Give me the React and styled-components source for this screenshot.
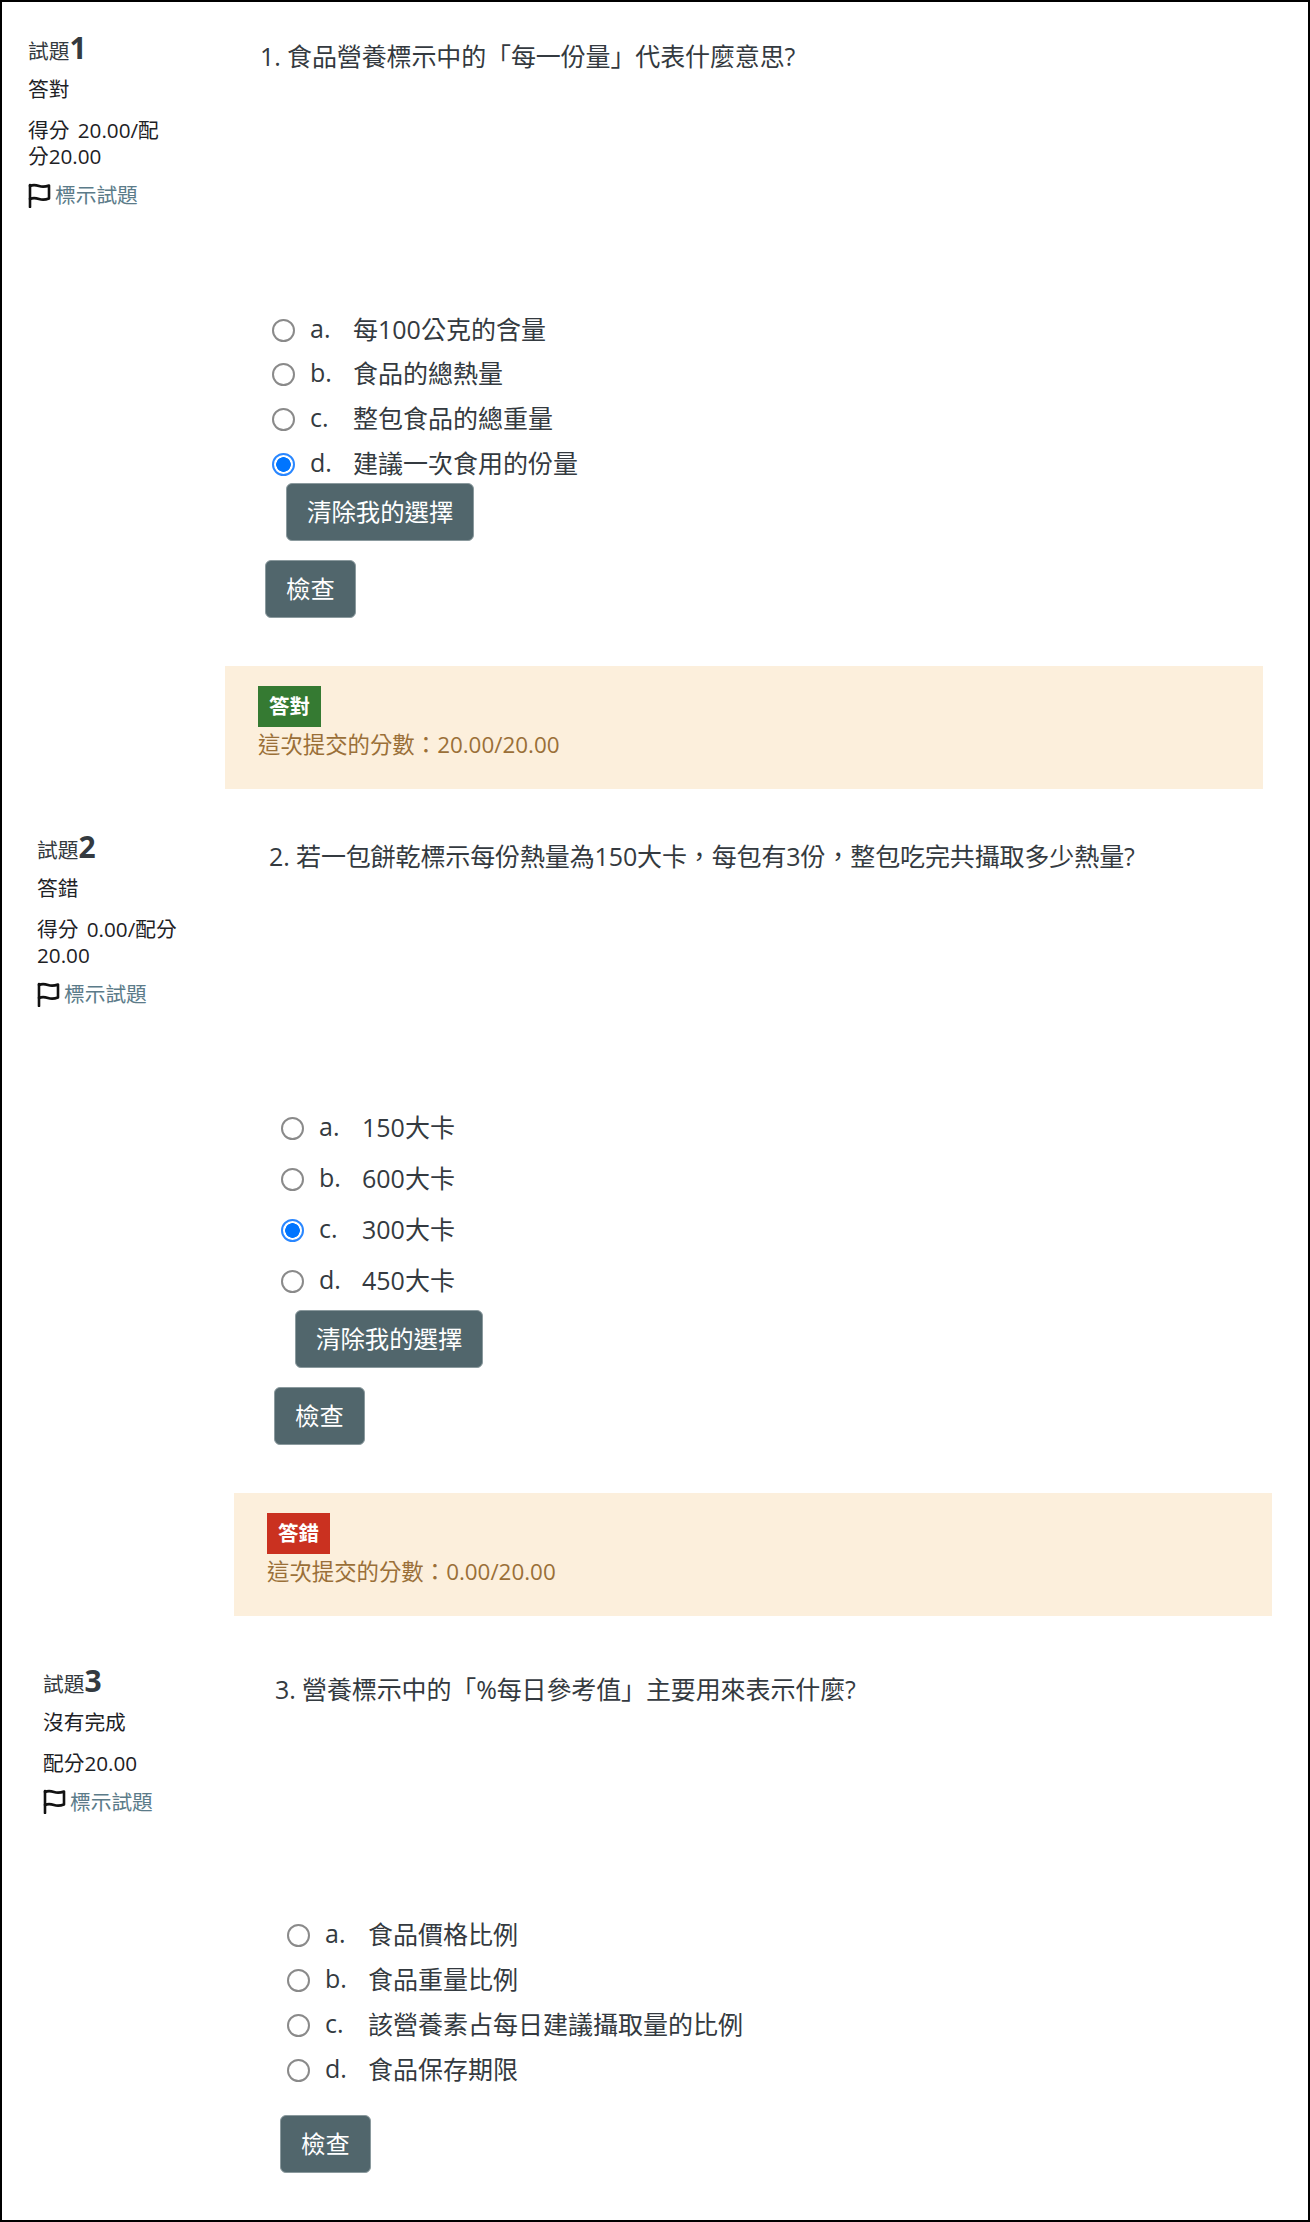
import React from 'react';
import styled, { createGlobalStyle } from 'styled-components';

const GlobalStyle = createGlobalStyle`
  html, body {
    margin: 0;
    padding: 0;
    background: #fff;
  }
  body {
    font-family: "Open Sans", "Noto Sans CJK TC", sans-serif;
    color: #343a40;
  }
  * {
    box-sizing: border-box;
  }
`;

const questions = [
  {
    no: 1,
    status: '答對',
    grade: '得分 20.00/配分20.00',
    title: '1. 食品營養標示中的「每一份量」代表什麼意思?',
    options: ['每100公克的含量', '食品的總熱量', '整包食品的總重量', '建議一次食用的份量'],
    picked: 3,
    indent: 0,
    top: 35,
    listTop: 237,
    rowGap: 6.7,
    clearTop: 0,
    checkTop: 19,
    feedback: { ok: true, label: '答對', score: '20.00/20.00' },
  },
  {
    no: 2,
    status: '答錯',
    grade: '得分 0.00/配分 20.00',
    title: '2. 若一包餅乾標示每份熱量為150大卡，每包有3份，整包吃完共攝取多少熱量?',
    options: ['150大卡', '600大卡', '300大卡', '450大卡'],
    picked: 2,
    indent: 9,
    top: 47,
    listTop: 235,
    rowGap: 13.3,
    clearTop: 9,
    checkTop: 19,
    feedback: { ok: false, label: '答錯', score: '0.00/20.00' },
  },
  {
    no: 3,
    status: '沒有完成',
    grade: '配分20.00',
    title: '3. 營養標示中的「%每日參考值」主要用來表示什麼?',
    options: ['食品價格比例', '食品重量比例', '該營養素占每日建議攝取量的比例', '食品保存期限'],
    picked: -1,
    indent: 15,
    top: 54,
    listTop: 210,
    rowGap: 6.7,
    clearTop: 0,
    checkTop: 26,
    feedback: null,
  },
];

const letters = ['a.', 'b.', 'c.', 'd.'];

// comma and colon sit low and left in the picture, the SC cut has them that way
const withPunct = (text) =>
  text.split(/([，：])/).map((part, i) => (i % 2 ? <Punct key={i}>{part}</Punct> : part));

const FlagIcon = () => (
  <FlagSvg viewBox="0 0 23 25" fill="none" stroke="#111" strokeWidth="2.6" strokeLinecap="round" strokeLinejoin="round">
    <path d="M2 24V2" />
    <path d="M2 3c3-1.500 6-1 9 0s6 1 10-.5v13c-4 1.500-7 1.500-10 .5s-6-1.500-9 0" />
  </FlagSvg>
);

const Question = ({ q }) => (
  <QuestionRow $indent={q.indent} $top={q.top}>
    <Side>
      <SideHead>
        試題<SideNumber>{q.no}</SideNumber>
      </SideHead>
      <SideStatus>{q.status}</SideStatus>
      <SideGrade>{q.grade}</SideGrade>
      <FlagRow>
        <FlagIcon />
        <FlagLink>標示試題</FlagLink>
      </FlagRow>
    </Side>
    <Content>
      <QuestionText>{withPunct(q.title)}</QuestionText>
      <OptionList $top={q.listTop} $gap={q.rowGap}>
        {q.options.map((text, i) => (
          <OptionRow key={text}>
            <Radio type="radio" name={`q${q.no}`} defaultChecked={i === q.picked} />
            <OptionLetter>{letters[i]}</OptionLetter>
            <OptionText>{text}</OptionText>
          </OptionRow>
        ))}
      </OptionList>
      {q.picked >= 0 && <ClearButton $top={q.clearTop}>清除我的選擇</ClearButton>}
      <CheckButton $top={q.checkTop}>檢查</CheckButton>
      {q.feedback && (
        <Feedback>
          <Badge $ok={q.feedback.ok}>{q.feedback.label}</Badge>
          <FeedbackText>{withPunct(`這次提交的分數：${q.feedback.score}`)}</FeedbackText>
        </Feedback>
      )}
    </Content>
  </QuestionRow>
);

const App = () => (
  <Page lang="zh-TW">
    <GlobalStyle />
    {questions.map((q) => (
      <Question key={q.no} q={q} />
    ))}
  </Page>
);

export default App;

const Page = styled.div`
  width: 1310px;
  height: 2222px;
  border: 2px solid #000;
  overflow: hidden;
`;

const Punct = styled.span`
  font-family: "Noto Sans CJK SC", sans-serif;
`;

const QuestionRow = styled.section`
  display: flex;
  align-items: flex-start;
  margin-top: ${(p) => p.$top}px;
  padding-left: ${(p) => p.$indent}px;
`;

const Side = styled.div`
  flex: none;
  width: 223px;
  padding-left: 26px;
  padding-right: 50px;
  font-size: 20.7px;
  line-height: 26px;
  color: #1d2125;
`;

const SideHead = styled.div`
  height: 26px;
  line-height: 22px;
  color: #343a40;
  white-space: nowrap;
`;

const SideNumber = styled.span`
  font-size: 30px;
  font-weight: 700;
`;

const SideStatus = styled.div`
  margin-top: 13px;
`;

const SideGrade = styled.div`
  margin-top: 15px;
  word-spacing: 3px;
`;

const FlagRow = styled.div`
  display: flex;
  align-items: center;
  gap: 4px;
  margin-top: 13px;
  white-space: nowrap;
`;

const FlagSvg = styled.svg`
  flex: none;
  width: 23px;
  height: 25px;
`;

const FlagLink = styled.a`
  color: #5b7b89;
`;

const Content = styled.div`
  flex: none;
  width: 1038px;
  padding-top: 1px;
`;

const QuestionText = styled.div`
  padding-left: 35px;
  font-size: 25px;
  line-height: 36px;
  letter-spacing: -0.12px;
  color: #343a40;
`;

const OptionList = styled.div`
  display: flex;
  flex-direction: column;
  gap: ${(p) => p.$gap}px;
  margin-top: ${(p) => p.$top}px;
  padding-left: 47px;
`;

const OptionRow = styled.label`
  display: flex;
  align-items: center;
  height: 38px;
  font-size: 25px;
  color: #343a40;
`;

const Radio = styled.input`
  flex: none;
  appearance: none;
  width: 23px;
  height: 23px;
  margin: 0 15px 0 0;
  border: 2px solid #8a8a8a;
  border-radius: 50%;
  background: #fff;

  &:checked {
    border-color: #2a87ff;
    background: radial-gradient(circle, #0075ff 0 7px, #fff 7.6px);
  }
`;

const OptionLetter = styled.span`
  flex: none;
  width: 43px;
  padding-bottom: 5px;
`;

const OptionText = styled.span`
  padding-bottom: 5px;
`;

const Button = styled.button`
  display: block;
  height: 58px;
  padding: 0 20px;
  border: 1px solid #8b9a9e;
  border-radius: 6px;
  background: #51666c;
  color: #fff;
  font-family: inherit;
  font-size: 24.4px;
  line-height: 1;
`;

const ClearButton = styled(Button)`
  margin-top: ${(p) => p.$top}px;
  margin-left: 61px;
`;

const CheckButton = styled(Button)`
  margin-top: ${(p) => p.$top}px;
  margin-left: 40px;
`;

const Feedback = styled.div`
  height: 123px;
  margin-top: 48px;
  padding: 20px 33px 0;
  background: #fcefdc;
`;

const Badge = styled.div`
  display: inline-block;
  vertical-align: top;
  height: 41px;
  padding: 0 11px;
  background: ${(p) => (p.$ok ? '#357a32' : '#ca3120')};
  color: #fff;
  font-size: 20.5px;
  font-weight: 700;
  line-height: 41px;
`;

const FeedbackText = styled.div`
  font-size: 22.4px;
  line-height: 33px;
  color: #9a6f38;
`;
